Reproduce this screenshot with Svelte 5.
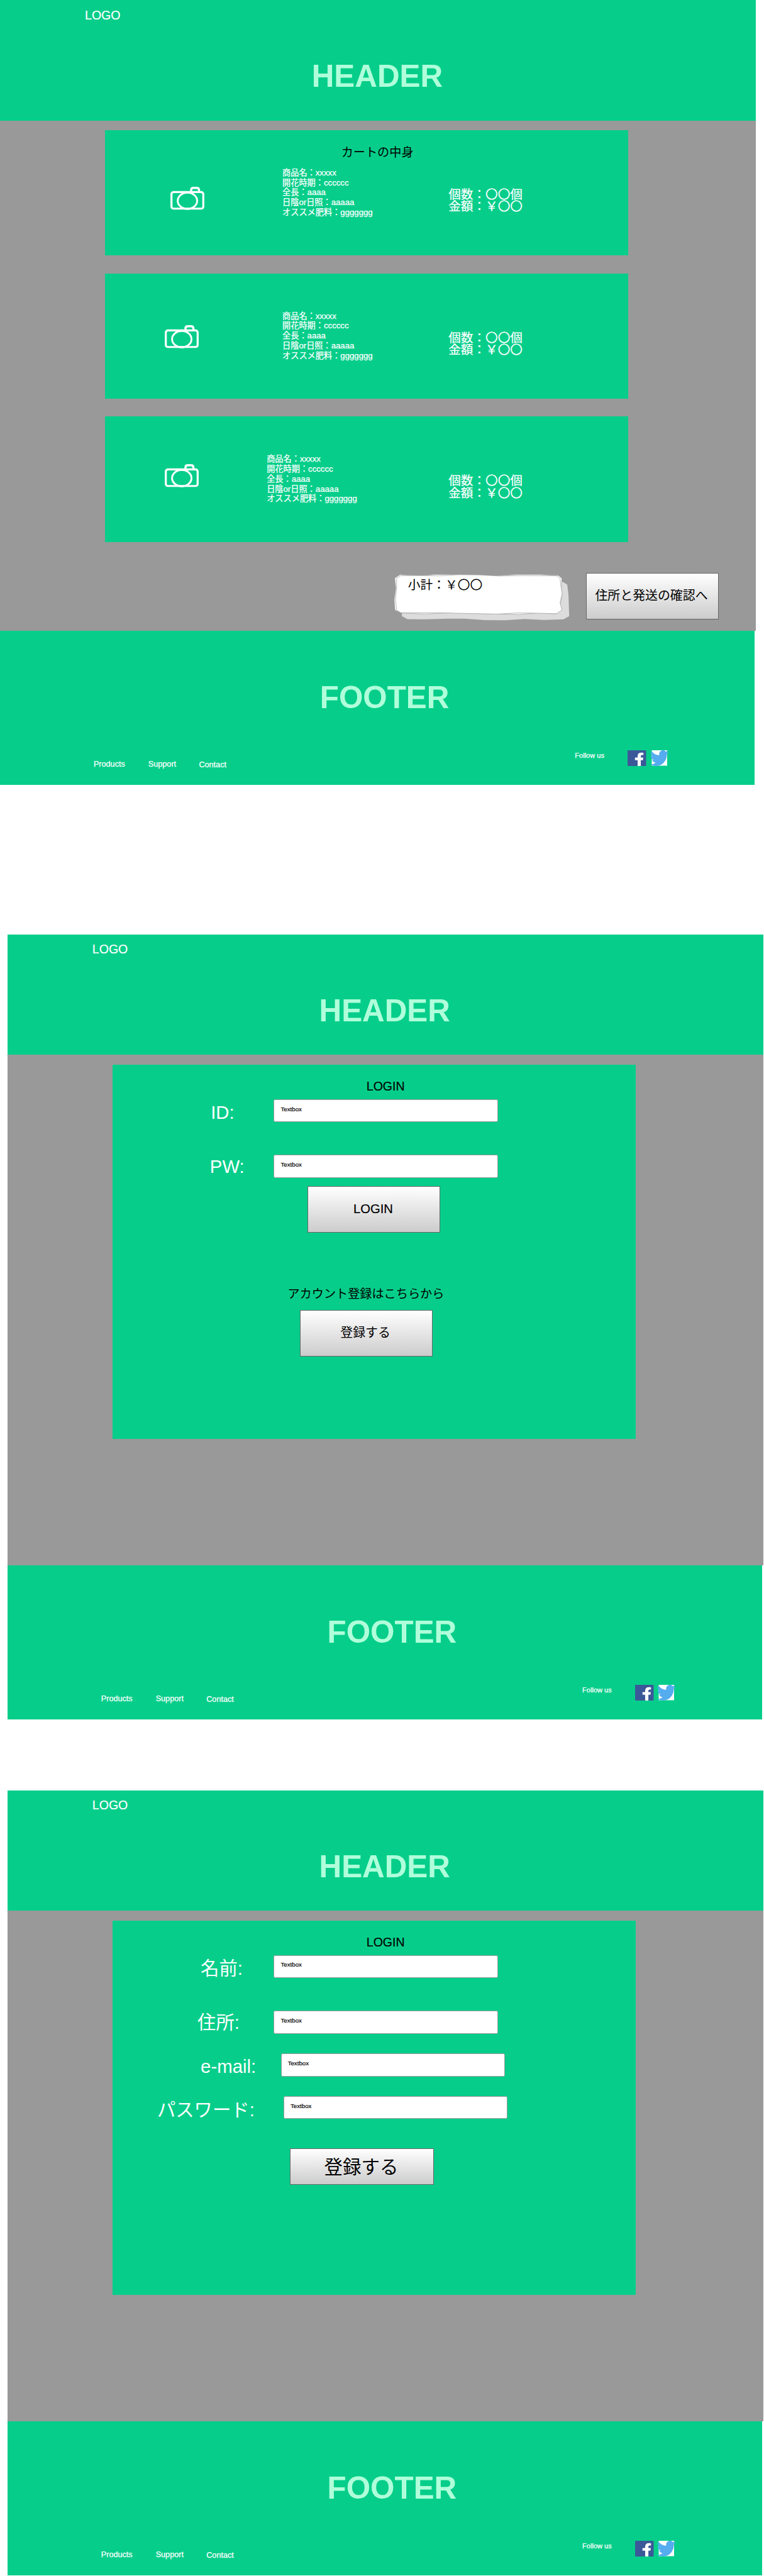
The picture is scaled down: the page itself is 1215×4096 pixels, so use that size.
<script>
  const details = ['商品名：xxxxx', '開花時期：cccccc', '全長：aaaa', '日陰or日照：aaaaa', 'オススメ肥料：ggggggg'];
  const items = [
    { kind: 'first', title: 'カートの中身' },
    { kind: 'second', title: '' },
    { kind: 'third', title: '' }
  ];
  const loginFields = [
    { label: 'ID:', kind: 'id' },
    { label: 'PW:', kind: 'pw' }
  ];
  const signupFields = [
    { label: '名前:', kind: 'name' },
    { label: '住所:', kind: 'address' },
    { label: 'e-mail:', kind: 'email' },
    { label: 'パスワード:', kind: 'password' }
  ];
</script>

{#snippet header()}
  <header>
    <div class="logo">LOGO</div>
    <h1>HEADER</h1>
  </header>
{/snippet}

{#snippet footer()}
  <footer>
    <h2>FOOTER</h2>
    <div class="footer-row">
      <nav>
        <span class="products">Products</span>
        <span class="support">Support</span>
        <span class="contact">Contact</span>
      </nav>
      <div class="social">
        <span class="follow">Follow us</span>
        <svg class="fb" viewBox="0 0 35 29.7" preserveAspectRatio="none">
          <rect width="35" height="29.7" rx="1.2" fill="#3b5998" />
          <path
            fill="#fff"
            d="M19 29.7V18.7H14V13.7H19V11C19 6.6 21.6 4.3 26 4.3C27.8 4.3 29.2 4.5 30 4.7V8.8H27.6C25.5 8.8 25 9.7 25 11.2V13.7H29.6L29 18.7H25V29.7Z"
          />
        </svg>
        <svg class="tw" viewBox="0 0 35 29.7">
          <rect x="3" width="29" height="29" fill="#fff" />
          <svg viewBox="0 2.25 24 19.5" width="35" height="29.7" preserveAspectRatio="none">
            <path
              fill="#55acee"
              d="M23.953 4.57a10 10 0 01-2.825.775 4.958 4.958 0 002.163-2.723c-.951.555-2.005.959-3.127 1.184a4.92 4.92 0 00-8.384 4.482C7.69 8.095 4.067 6.13 1.64 3.162a4.822 4.822 0 00-.666 2.475c0 1.71.87 3.213 2.188 4.096a4.904 4.904 0 01-2.228-.616v.06a4.923 4.923 0 003.946 4.827 4.996 4.996 0 01-2.212.085 4.936 4.936 0 004.604 3.417 9.867 9.867 0 01-6.102 2.105c-.39 0-.779-.023-1.17-.067a13.995 13.995 0 007.557 2.209c9.053 0 13.998-7.496 13.998-13.985 0-.21 0-.42-.015-.63A9.935 9.935 0 0024 4.59z"
            />
          </svg>
        </svg>
      </div>
    </div>
  </footer>
{/snippet}

{#snippet field(f)}
  <div class="field {f.kind}">
    <span class="label">{f.label}</span>
    <div class="textbox">Textbox</div>
  </div>
{/snippet}

<main>
  <section class="page">
    {@render header()}
    <div class="body">
      {#each items as item}
        <article class="card item {item.kind}">
          <h3>{item.title}</h3>
          <div class="item-row">
            <div class="photo">
              <svg class="camera" viewBox="0 0 64 43" fill="none" stroke="#fff">
                <rect x="2" y="10" width="60" height="31.2" rx="4" stroke-width="3.8" />
                <ellipse cx="32.1" cy="26.4" rx="18.3" ry="15.4" stroke-width="3.5" />
                <path d="M39 9V6.5Q39 2 43.5 2H49.5Q54 2 54 6.5V9" stroke-width="4" />
              </svg>
            </div>
            <ul>
              {#each details as line}
                <li>{line}</li>
              {/each}
            </ul>
            <div class="amount">
              <div>個数：〇〇個</div>
              <div>金額：￥〇〇</div>
            </div>
          </div>
        </article>
      {/each}
      <div class="checkout">
        <div class="subtotal">
          <svg viewBox="0 0 340 94" stroke-linejoin="round">
            <path
              fill="#dcdcdc"
              d="M18 70V82.7L28.4 88.3L61.5 88.7L101.6 87.3L137 87.3L172.4 90L212.5 90.3L248.8 88L285.6 89.7L322.4 88.7L333.3 82.7L331.9 42L329.5 23L321 18Z"
            />
            <g fill="#fff" stroke="#999" stroke-width="0.8">
              <path
                d="M4.5 11L14.5 4.5L52 6.3L80 4.2L130 4L165 4.8L195 6.5L235 4.2L275 4L313 6L319.5 11.5L318.5 30L320 45L316.5 60L318 71.5L309 78.5L275 76.5L240 79.3L172 78L119 76L62 78.5L19 77L5 71.5L3.5 52L6.5 30Z"
              />
              <path
                d="M8.1 11.3L15.7 6.3L52 6.2L88 6.8L125 4.6L163 5L202 7L245 6.3L309 6.7L316 11.5L317.5 25L320 40L316 57L319.5 71L309.5 78L272 77L236 76.4L197 78.7L119 77L87 76L15.7 76L8 71.3L6 50L8 30Z"
              />
            </g>
          </svg>
          <span>小計：￥〇〇</span>
        </div>
        <button class="to-address">住所と発送の確認へ</button>
      </div>
    </div>
    {@render footer()}
  </section>

  <section class="page login">
    {@render header()}
    <div class="body">
      <div class="card form">
        <h3>LOGIN</h3>
        {#each loginFields as f}
          {@render field(f)}
        {/each}
        <button class="do-login">LOGIN</button>
        <p>アカウント登録はこちらから</p>
        <button class="to-signup">登録する</button>
      </div>
    </div>
    {@render footer()}
  </section>

  <section class="page signup">
    {@render header()}
    <div class="body">
      <div class="card form">
        <h3>LOGIN</h3>
        {#each signupFields as f}
          {@render field(f)}
        {/each}
        <button class="do-signup">登録する</button>
      </div>
    </div>
    {@render footer()}
  </section>
</main>

<style>
  /* 1rem stands for ten design units, so every length scales together. */
  :global(html) {
    font-size: 8.4375px;
    background: #fff;
  }
  main,
  button {
    font-family: 'Liberation Sans', 'Noto Sans CJK JP', sans-serif;
  }
  main {
    width: 144rem;
    height: 485.4rem;
    overflow: hidden;
    line-height: 1;
    color: #fff;
  }
  main * {
    box-sizing: border-box;
    white-space: nowrap;
  }
  h1,
  h2,
  h3,
  p,
  ul {
    margin: 0;
    padding: 0;
    list-style: none;
  }
  svg {
    display: block;
    overflow: visible;
  }

  .page {
    width: 142.5rem;
    height: 147.9rem;
    display: flex;
    flex-direction: column;
  }
  .login {
    margin: 28.2rem 0 0 1.4rem;
  }
  .signup {
    margin: 13.4rem 0 0 1.4rem;
  }

  header {
    height: 22.7rem;
    background: #06ce8a;
    padding-top: 1.73rem;
  }
  .logo {
    font-size: 2.32rem;
    padding-left: 16rem;
    -webkit-text-stroke: 0.2px;
  }
  h1,
  h2 {
    font-size: 5.85rem;
    font-weight: bold;
    color: #b0ffdb;
  }
  h1 {
    margin-top: 7.37rem;
    padding-left: 58.75rem;
  }

  .body {
    height: 96.2rem;
    background: #999;
    padding: 1.8rem 0 0 19.82rem;
  }
  .card {
    width: 98.55rem;
    background: #06ce8a;
  }
  h3 {
    font-size: 2.32rem;
    font-weight: normal;
    color: #000;
  }

  .item {
    height: 23.67rem;
    margin-bottom: 3.33rem;
  }
  .item h3 {
    font-size: 2.27rem;
    height: 7.13rem;
    padding: 3.06rem 0 0 44.5rem;
  }
  .item-row {
    display: grid;
    grid-template-columns: 33.4rem 31.3rem 1fr;
  }
  .third .item-row {
    grid-template-columns: 30.45rem 34.25rem 1fr;
  }
  .photo {
    padding: 2.6rem 0 0 11.25rem;
  }
  .first .photo {
    padding: 3.57rem 0 0 12.31rem;
  }
  .third .photo {
    padding-top: 1.87rem;
  }
  .camera {
    width: 6.4rem;
    height: 4.3rem;
  }
  li {
    font-size: 1.565rem;
    line-height: 1.865rem;
    -webkit-text-stroke: 0.25px;
  }
  .amount {
    font-size: 2.33rem;
    padding-top: 3.9rem;
    -webkit-text-stroke: 0.2px;
  }

  .checkout {
    display: flex;
    padding-top: 2.3rem;
    padding-left: 54.18rem;
  }
  .subtotal {
    display: grid;
    width: 36.44rem;
    font-size: 2.34rem;
    color: #000;
  }
  .subtotal > * {
    grid-area: 1 / 1;
  }
  .subtotal svg {
    width: 34rem;
    height: 9.4rem;
  }
  .subtotal span {
    padding: 1.4rem 0 0 2.9rem;
  }

  button {
    display: flex;
    justify-content: center;
    align-items: flex-start;
    margin: 0;
    padding: 3.1rem 0.3rem 0 0;
    width: 25rem;
    height: 8.77rem;
    border: 1px solid #666;
    background: linear-gradient(#fff, #ccc);
    color: #000;
    font-size: 2.36rem;
    line-height: 1;
  }
  .to-address {
    margin-top: 0.2rem;
  }

  .form {
    height: 70.6rem;
    padding-top: 3.04rem;
  }
  .form h3 {
    padding-left: 47.85rem;
    margin-bottom: 1.16rem;
    -webkit-text-stroke: 0.2px;
  }
  .field {
    display: flex;
    height: 4.34rem;
  }
  .label {
    font-size: 3.48rem;
    width: 30.38rem;
    padding: 0.73rem 0 0 18.5rem;
  }
  .textbox {
    width: 42.25rem;
    height: 4.34rem;
    border: 1px solid #999;
    border-radius: 0.3rem;
    background: #fff;
    color: #000;
    font-size: 1.15rem;
    padding: 1.18rem 0 0 1.2rem;
    -webkit-text-stroke: 0.2px;
  }
  .pw,
  .address {
    margin-top: 6.18rem;
  }
  .pw .label {
    padding: 0.47rem 0 0 18.35rem;
  }
  .name .label {
    padding-left: 16.6rem;
  }
  .address .label {
    padding: 0.49rem 0 0 16rem;
  }
  .email {
    margin-top: 3.7rem;
  }
  .email .label {
    width: 31.7rem;
    padding: 0.64rem 0 0 16.6rem;
  }
  .password {
    margin-top: 3.68rem;
  }
  .password .label {
    width: 32.22rem;
    padding: 0.81rem 0 0 8.4rem;
  }
  .do-login {
    margin: 1.53rem 0 0 36.77rem;
    font-size: 2.4rem;
    padding-top: 2.95rem;
    -webkit-text-stroke: 0.2px;
  }
  p {
    color: #000;
    font-size: 2.27rem;
    margin: 10.4rem 0 0 33rem;
  }
  .to-signup {
    margin: 1.97rem 0 0 35.3rem;
  }
  .do-signup {
    width: 27.13rem;
    height: 6.9rem;
    font-size: 3.49rem;
    margin: 5.48rem 0 0 33.45rem;
    padding-top: 1.65rem;
  }

  footer {
    width: 142.2rem;
    height: 29rem;
    background: #06ce8a;
    padding-top: 9.61rem;
  }
  h2 {
    padding-left: 60.3rem;
  }
  .footer-row {
    display: flex;
    -webkit-text-stroke: 0.25px;
  }
  nav {
    display: flex;
    width: 108.36rem;
    padding: 8.97rem 0 0 17.65rem;
    font-size: 1.5rem;
  }
  .products {
    width: 10.3rem;
  }
  .support {
    width: 9.55rem;
  }
  .contact {
    padding-top: 0.1rem;
  }
  .social {
    display: flex;
    padding-top: 7.04rem;
    font-size: 1.31rem;
  }
  .follow {
    width: 9.94rem;
    padding-top: 0.38rem;
  }
  .fb,
  .tw {
    width: 3.5rem;
    height: 2.97rem;
  }
  .tw {
    margin-left: 0.7rem;
  }
</style>
